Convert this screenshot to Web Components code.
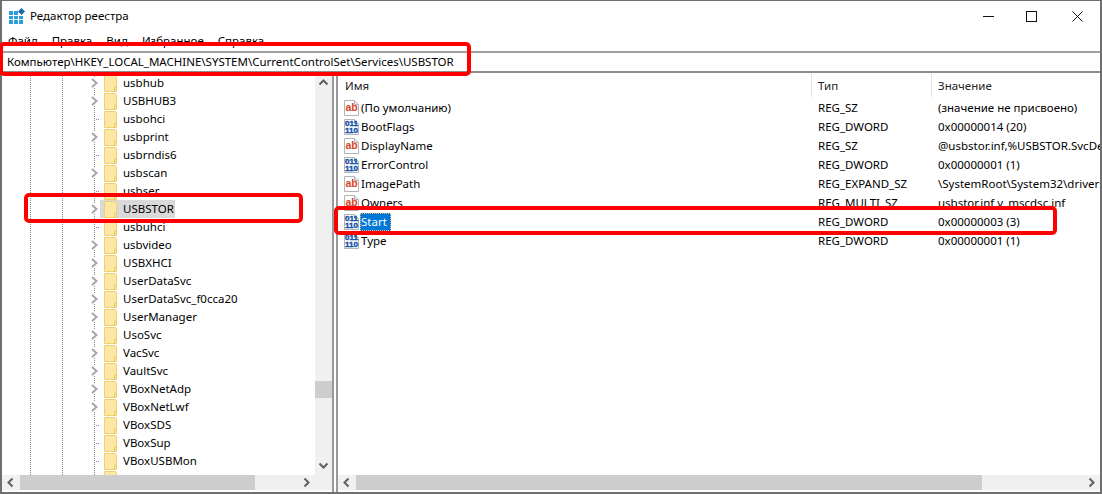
<!DOCTYPE html>
<html lang="ru">
<head>
<meta charset="utf-8">
<title>Редактор реестра</title>
<style>
  html, body { margin: 0; padding: 0; background: #fff; }
  body { width: 1102px; height: 494px; overflow: hidden; font: 11.5px "Noto Sans", "Liberation Sans", sans-serif; color: #000; }
</style>
</head>
<body>
<reg-window>
  <reg-titlebar title="Редактор реестра"></reg-titlebar>
  <reg-menu items='["Файл","Правка","Вид","Избранное","Справка"]'></reg-menu>
  <reg-address value="Компьютер\HKEY_LOCAL_MACHINE\SYSTEM\CurrentControlSet\Services\USBSTOR"></reg-address>
  <reg-split>
    <reg-tree slot="tree"></reg-tree>
    <reg-list slot="list"></reg-list>
  </reg-split>
</reg-window>
<reg-mark style="left:-1px;top:42px;width:472px;height:34px"></reg-mark>
<reg-mark style="left:24px;top:193px;width:279px;height:30px"></reg-mark>
<reg-mark style="left:334px;top:206px;width:723px;height:29px"></reg-mark>

<script>
const FONT = '"Noto Sans", "Liberation Sans", sans-serif';

class RegWindow extends HTMLElement {
  constructor() {
    super();
    this.attachShadow({ mode: 'open' });
    this.shadowRoot.innerHTML = `
      <style>
        :host { display: flex; flex-direction: column; box-sizing: border-box; width: 1102px; height: 494px;
                border: 2px solid #6f6f6f; border-top-width: 1px; background: #fff;
                font: 11.5px ${FONT}; }
      </style>
      <slot></slot>`;
  }
}

class RegTitlebar extends HTMLElement {
  constructor() {
    super();
    this.attachShadow({ mode: 'open' });
  }
  connectedCallback() {
    this.shadowRoot.innerHTML = `
      <style>
        :host { display: flex; align-items: center; height: 30px; flex: none; }
        .logo { margin-left: 7px; width: 16px; height: 16px; flex: none; }
        .name { margin-left: 5px; padding-bottom: 2px; color: #000; flex: 1; }
        .btn { box-sizing: border-box; width: 46px; height: 30px; display: flex; align-items: center; justify-content: center; }
        .min { padding-left: 6px; }
        svg { display: block; }
      </style>
      <svg class="logo" viewBox="0 0 16 16">
        <g fill="#2d9fe0">
          <rect x="0" y="3" width="4" height="4"/><rect x="5" y="3" width="4" height="4"/>
          <rect x="0" y="8" width="4" height="3"/><rect x="5" y="8" width="4" height="3"/><rect x="10" y="8" width="4" height="3"/>
          <rect x="0" y="12" width="4" height="4"/><rect x="5" y="12" width="4" height="4"/><rect x="10" y="12" width="4" height="4"/>
        </g>
        <rect x="10" y="1" width="5" height="5" fill="#1c6ea8" transform="rotate(45 12.5 3.5)"/>
      </svg>
      <span class="name">${this.getAttribute('title')}</span>
      <div class="btn min"><svg width="11" height="11"><path d="M0 5.5H11" stroke="#111" fill="none"/></svg></div>
      <div class="btn"><svg width="11" height="11"><rect x=".5" y=".5" width="10" height="10" stroke="#111" fill="none"/></svg></div>
      <div class="btn"><svg width="11" height="11"><path d="M.5 .5L10.5 10.5M10.5 .5L.5 10.5" stroke="#111" fill="none"/></svg></div>`;
  }
}

class RegMenu extends HTMLElement {
  constructor() {
    super();
    this.attachShadow({ mode: 'open' });
  }
  connectedCallback() {
    const items = JSON.parse(this.getAttribute('items')) || [];
    this.shadowRoot.innerHTML = `
      <style>
        :host { display: flex; height: 20px; padding-left: 6px; gap: 14px; align-items: center; flex: none; }
        span { padding-bottom: 2px; }
      </style>
      ${items.map((item) => `<span>${item}</span>`).join('')}`;
  }
}

class RegAddress extends HTMLElement {
  constructor() {
    super();
    this.attachShadow({ mode: 'open' });
  }
  connectedCallback() {
    this.shadowRoot.innerHTML = `
      <style>
        :host { display: flex; align-items: center; flex: none; height: 18px; padding-left: 5px;
                border-top: 2px solid #a0a0a0; border-bottom: 2px solid #8c8c8c; white-space: nowrap; }
        span { padding-bottom: 2px; }
      </style>
      <span>${this.getAttribute('value')}</span>`;
  }
}

class RegSplit extends HTMLElement {
  constructor() {
    super();
    this.attachShadow({ mode: 'open' });
    this.shadowRoot.innerHTML = `
      <style>
        :host { display: grid; grid-template-columns: 332px minmax(0, 1fr); grid-template-rows: minmax(0, 1fr); flex: 1; min-height: 0; margin-top: 1px; }
        .left { min-width: 0; min-height: 0; display: flex; border-right: 2px solid #9a9a9e; }
        .right { min-width: 0; min-height: 0; display: flex; border-left: 2px solid #9a9a9e; margin-left: 2px; }
        ::slotted(*) { flex: 1; min-width: 0; }
      </style>
      <div class="left"><slot name="tree"></slot></div>
      <div class="right"><slot name="list"></slot></div>`;
  }
}

class RegScrollbar extends HTMLElement {
  constructor() {
    super();
    this.attachShadow({ mode: 'open' });
  }
  connectedCallback() {
    const vertical = this.getAttribute('orient') === 'v';
    const start = this.getAttribute('thumb-start');
    const size = this.getAttribute('thumb-size');
    const arrow = (d) => `<svg width="17" height="${vertical ? 17 : 15}" viewBox="0 0 17 ${vertical ? 17 : 15}"><path d="${d}" fill="none" stroke="#606060" stroke-width="2"/></svg>`;
    const first = vertical ? 'M4.5 10.5L8.5 6.5L12.5 10.5' : 'M10.5 3.5L6.5 7.5L10.5 11.5';
    const last = vertical ? 'M4.5 5.5L8.5 9.5L12.5 5.5' : 'M6.5 3.5L10.5 7.5L6.5 11.5';
    this.shadowRoot.innerHTML = `
      <style>
        :host { display: flex; flex: none; background: #f0f0f0; flex-direction: ${vertical ? 'column' : 'row'}; ${vertical ? 'width: 17px;' : 'height: 15px; margin-bottom: 2px;'} }
        .track { flex: 1; min-width: 0; min-height: 0; display: flex; flex-direction: ${vertical ? 'column' : 'row'}; }
        .thumb { background: #cdcdcd; flex: none; ${vertical ? `margin-top:${start}px;height:${size}px;` : `margin-left:${start}px;width:${size}px;`} }
        svg { display: block; flex: none; }
      </style>
      ${arrow(first)}<div class="track"><div class="thumb"></div></div>${arrow(last)}`;
  }
}

class TreeRow extends HTMLElement {
  constructor() {
    super();
    this.attachShadow({ mode: 'open' });
  }
  connectedCallback() {
    const leaf = this.hasAttribute('leaf');
    const selected = this.hasAttribute('selected');
    this.shadowRoot.innerHTML = `
      <style>
        :host { display: flex; align-items: center; height: 18px; padding-left: 88px; flex: none; white-space: nowrap; }
        .exp { width: 10px; height: 18px; flex: none; display: block; }
        .item { display: flex; align-items: center; height: 18px; padding: 0 1px 0 4px; background: ${selected ? '#d9d9d9' : 'transparent'}; }
        .folder { width: 13px; height: 17px; margin-right: 6px; display: block; flex: none; }
        span { padding-bottom: 2px; }
      </style>
      <svg class="exp" viewBox="0 0 10 18">
        ${leaf
          ? '<path d="M6 9.5H10" stroke="#8a8a8a" stroke-dasharray="1 1" fill="none"/>'
          : '<rect x="0" y="4" width="9" height="10" fill="#fff"/><path d="M2 5L6.5 9L2 13" stroke="#a6a6a6" stroke-width="2" fill="none"/>'}
      </svg>
      <div class="item">
        <svg class="folder" viewBox="0 0 13 17">
          <path d="M.5 .5H11.5L12.5 1.5V16.5H.5Z" fill="#fce8a4" stroke="#f0cf6e"/>
          <path d="M10.5 16.5V12.5H12.5" fill="none" stroke="#eec65a"/>
        </svg>
        <span>${this.getAttribute('label')}</span>
      </div>`;
  }
}

class RegTree extends HTMLElement {
  constructor() {
    super();
    this.attachShadow({ mode: 'open' });
  }
  connectedCallback() {
    const rows = [
      ['usbhub'], ['USBHUB3'], ['usbohci', 1], ['usbprint'], ['usbrndis6', 1], ['usbscan'], ['usbser', 1],
      ['USBSTOR', 0, 1], ['usbuhci', 1], ['usbvideo'], ['USBXHCI'], ['UserDataSvc'], ['UserDataSvc_f0cca20'],
      ['UserManager'], ['UsoSvc'], ['VacSvc'], ['VaultSvc'], ['VBoxNetAdp'], ['VBoxNetLwf'],
      ['VBoxSDS', 1], ['VBoxSup', 1], ['VBoxUSBMon', 1], ['', 1]
    ];
    const dots = (x) => `repeating-linear-gradient(to bottom, #8a8a8a 0 1px, transparent 1px 2px) ${x}px 0 / 1px 100% no-repeat`;
    this.shadowRoot.innerHTML = `
      <style>
        :host { display: flex; flex-direction: column; min-height: 0; }
        .top { flex: 1; display: flex; min-height: 0; }
        .rows { flex: 1; min-width: 0; overflow: hidden; background: ${dots(28)}, ${dots(60)}, ${dots(92)}; }
        .bottom { display: flex; flex: none; }
        .bottom reg-scrollbar { flex: 1; min-width: 0; }
        .corner { width: 17px; height: 15px; background: #f0f0f0; flex: none; }
      </style>
      <div class="top">
        <div class="rows">
          ${rows.map(([label, leaf, selected]) => `<tree-row label="${label}"${leaf ? ' leaf' : ''}${selected ? ' selected' : ''}></tree-row>`).join('')}
        </div>
        <reg-scrollbar orient="v" thumb-start="290" thumb-size="17"></reg-scrollbar>
      </div>
      <div class="bottom">
        <reg-scrollbar orient="h" thumb-start="1" thumb-size="235"></reg-scrollbar>
        <div class="corner"></div>
      </div>`;
  }
}

class RegIcon extends HTMLElement {
  constructor() {
    super();
    this.attachShadow({ mode: 'open' });
  }
  connectedCallback() {
    const binary = this.getAttribute('kind') === 'bin';
    this.shadowRoot.innerHTML = `
      <style>
        :host { display: block; width: 16px; height: 16px; flex: none; }
        svg { display: block; }
        text { font-family: "Liberation Sans", sans-serif; font-weight: 700; }
      </style>
      <svg width="16" height="16" viewBox="0 0 16 16">
        <path d="M.5 .5H10.5L14.5 4.5V15.5H.5Z" fill="#fff" stroke="#b4b4b4"/>
        <path d="M10.5 .5V4.5H14.5" fill="#e8e8e8" stroke="#b4b4b4"/>
        ${binary
          ? `<text x="1" y="7" font-size="8" fill="#1450a8" stroke="#1450a8" stroke-width=".4" textLength="13" lengthAdjust="spacingAndGlyphs">011</text>
             <text x="1" y="14" font-size="8" fill="#1450a8" stroke="#1450a8" stroke-width=".4" textLength="13" lengthAdjust="spacingAndGlyphs">110</text>`
          : `<text x="1.5" y="11" font-size="10.5" fill="#d8431f">ab</text>`}
      </svg>`;
  }
}

class ListRow extends HTMLElement {
  constructor() {
    super();
    this.attachShadow({ mode: 'open' });
  }
  connectedCallback() {
    const selected = this.hasAttribute('selected');
    this.shadowRoot.innerHTML = `
      <style>
        :host { display: grid; grid-template-columns: 473px 120px minmax(0, 1fr); height: 19px; align-items: center; white-space: nowrap; overflow: hidden; }
        .name { display: flex; align-items: center; padding-left: 6px; }
        .label { padding: 0 4px 0 1px; height: 18px; line-height: 18px; ${selected ? 'background: #0078d7; color: #fff; outline: 1px dotted #ffb070; outline-offset: -1px;' : ''} }
        .cell { padding-left: 7px; overflow: hidden; }
      </style>
      <div class="name"><reg-icon kind="${this.getAttribute('kind')}"></reg-icon><span class="label">${this.getAttribute('name')}</span></div>
      <div class="cell">${this.getAttribute('type')}</div>
      <div class="cell">${this.getAttribute('value')}</div>`;
  }
}

class RegList extends HTMLElement {
  constructor() {
    super();
    this.attachShadow({ mode: 'open' });
  }
  connectedCallback() {
    const rows = [
      ['ab', '(По умолчанию)', 'REG_SZ', '(значение не присвоено)'],
      ['bin', 'BootFlags', 'REG_DWORD', '0x00000014 (20)'],
      ['ab', 'DisplayName', 'REG_SZ', '@usbstor.inf,%USBSTOR.SvcDe'],
      ['bin', 'ErrorControl', 'REG_DWORD', '0x00000001 (1)'],
      ['ab', 'ImagePath', 'REG_EXPAND_SZ', '\\SystemRoot\\System32\\drivers'],
      ['ab', 'Owners', 'REG_MULTI_SZ', 'usbstor.inf v_mscdsc.inf'],
      ['bin', 'Start', 'REG_DWORD', '0x00000003 (3)', 1],
      ['bin', 'Type', 'REG_DWORD', '0x00000001 (1)']
    ];
    this.shadowRoot.innerHTML = `
      <style>
        :host { display: flex; flex-direction: column; min-height: 0; min-width: 0; }
        .head { display: grid; grid-template-columns: 473px 120px minmax(0, 1fr); height: 23px; flex: none; color: #222; }
        .head span { box-sizing: border-box; padding-left: 6px; height: 23px; line-height: 23px; border-left: 1px solid #e3e3e3; }
        .head span:first-child { border-left: 0; padding-left: 7px; }
        .body { flex: 1; min-height: 0; overflow: hidden; padding-top: 1px; }
      </style>
      <div class="head"><span>Имя</span><span>Тип</span><span>Значение</span></div>
      <div class="body">
        ${rows.map(([kind, name, type, value, sel]) => `<list-row kind="${kind}" name="${name}" type="${type}" value="${value}"${sel ? ' selected' : ''}></list-row>`).join('')}
      </div>
      <reg-scrollbar orient="h" thumb-start="1" thumb-size="626"></reg-scrollbar>`;
  }
}

// red callouts drawn over the screenshot
class RegMark extends HTMLElement {
  constructor() {
    super();
    this.attachShadow({ mode: 'open' });
    this.shadowRoot.innerHTML = `
      <style>
        :host { position: absolute; display: block; box-sizing: border-box; border: 4px solid #f00; border-radius: 5px; }
      </style>`;
  }
}

customElements.define('reg-window', RegWindow);
customElements.define('reg-titlebar', RegTitlebar);
customElements.define('reg-menu', RegMenu);
customElements.define('reg-address', RegAddress);
customElements.define('reg-split', RegSplit);
customElements.define('reg-scrollbar', RegScrollbar);
customElements.define('tree-row', TreeRow);
customElements.define('reg-tree', RegTree);
customElements.define('reg-icon', RegIcon);
customElements.define('list-row', ListRow);
customElements.define('reg-list', RegList);
customElements.define('reg-mark', RegMark);
</script>
</body>
</html>
